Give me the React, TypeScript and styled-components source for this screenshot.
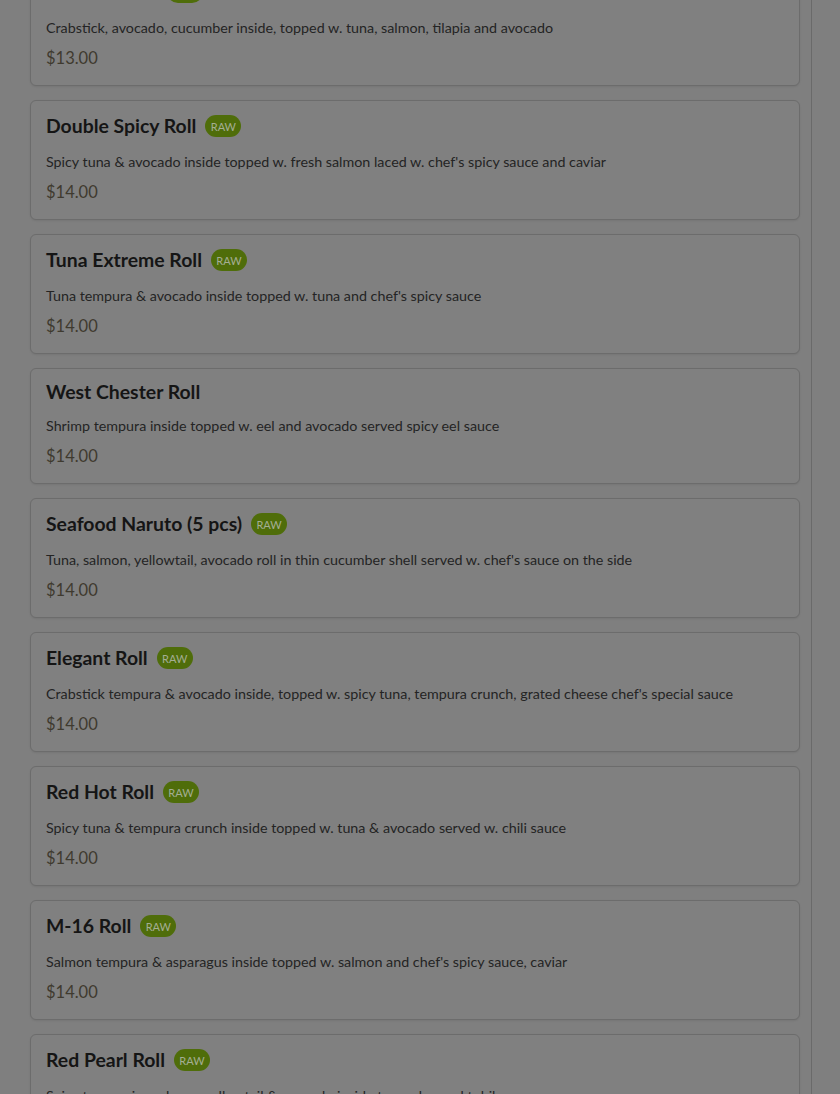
import React, { useEffect, useRef } from "react";
import styled, { createGlobalStyle } from "styled-components";

const GlobalStyle = createGlobalStyle`
  html, body {
    margin: 0;
    padding: 0;
    height: 100%;
    overflow: hidden;
    background: #7f7f7f;
  }
  body {
    font-family: "Nunito", "Lato", "Open Sans", sans-serif;
  }
  * { box-sizing: border-box; }
`;

const Page = styled.div`
  display: flex;
  height: 100vh;
  background: #7f7f7f;
`;

const Scroller = styled.div`
  width: 812px;
  height: 100vh;
  overflow-y: auto;
  border-right: 1px solid #6a6a6a;
  padding: 16px 11px 40px 30px;
  scrollbar-width: none;
  &::-webkit-scrollbar { display: none; }
`;

const List = styled.div`
  display: flex;
  flex-direction: column;
  gap: 14px;
`;

const Card = styled.div`
  border: 1px solid #6c6c6c;
  border-radius: 6px;
  background: #808080;
  box-shadow: 0 1px 2px rgba(0, 0, 0, 0.08);
  padding: 11px 15px 15px;
  display: flex;
  flex-direction: column;
`;

const TitleRow = styled.div<{ $badge: boolean }>`
  display: flex;
  align-items: center;
  gap: 9px;
  height: ${(p) => (p.$badge ? 28 : 24)}px;
`;

const Title = styled.h3`
  margin: 0;
  font-family: "Lato", sans-serif;
  font-weight: 700;
  font-size: 19.4px;
  line-height: 24px;
  color: #151515;
`;

const Badge = styled.span`
  display: inline-flex;
  align-items: center;
  justify-content: center;
  height: 22px;
  width: 36px;
  border-radius: 11px;
  background: #4f6d0a;
  color: #a4ae93;
  font-family: "Lato", sans-serif;
  font-size: 11px;
  font-weight: 400;
`;

const Desc = styled.p`
  margin: 12px 0 0;
  font-family: "Lato", sans-serif;
  font-size: 14.3px;
  line-height: 20px;
  color: #242424;
`;

const Price = styled.div`
  margin-top: 8px;
  font-family: "Lato", sans-serif;
  font-size: 16.5px;
  line-height: 24px;
  color: #3f3a2f;
`;

type Item = { name: string; raw: boolean; desc: string; price: string };

const items: Item[] = [
  { name: "Rainbow Roll", raw: true, desc: "Crabstick, avocado, cucumber inside, topped w. tuna, salmon, tilapia and avocado", price: "$13.00" },
  { name: "Double Spicy Roll", raw: true, desc: "Spicy tuna & avocado inside topped w. fresh salmon laced w. chef's spicy sauce and caviar", price: "$14.00" },
  { name: "Tuna Extreme Roll", raw: true, desc: "Tuna tempura & avocado inside topped w. tuna and chef's spicy sauce", price: "$14.00" },
  { name: "West Chester Roll", raw: false, desc: "Shrimp tempura inside topped w. eel and avocado served spicy eel sauce", price: "$14.00" },
  { name: "Seafood Naruto (5 pcs)", raw: true, desc: "Tuna, salmon, yellowtail, avocado roll in thin cucumber shell served w. chef's sauce on the side", price: "$14.00" },
  { name: "Elegant Roll", raw: true, desc: "Crabstick tempura & avocado inside, topped w. spicy tuna, tempura crunch, grated cheese chef's special sauce", price: "$14.00" },
  { name: "Red Hot Roll", raw: true, desc: "Spicy tuna & tempura crunch inside topped w. tuna & avocado served w. chili sauce", price: "$14.00" },
  { name: "M-16 Roll", raw: true, desc: "Salmon tempura & asparagus inside topped w. salmon and chef's spicy sauce, caviar", price: "$14.00" },
  { name: "Red Pearl Roll", raw: true, desc: "Spicy tuna, spicy salmon, yellowtail & avocado inside topped w. red tobiko", price: "$14.00" },
  { name: "Dragon Roll", raw: false, desc: "Shrimp tempura & cucumber inside topped w. eel and avocado", price: "$14.00" },
];

export default function App() {
  const ref = useRef<HTMLDivElement>(null);
  useEffect(() => {
    if (ref.current) ref.current.scrollTop = 50;
  }, []);
  return (
    <>
      <GlobalStyle />
      <Page>
        <Scroller ref={ref}>
          <List>
            {items.map((it) => (
              <Card key={it.name}>
                <TitleRow $badge={it.raw}>
                  <Title>{it.name}</Title>
                  {it.raw && <Badge>RAW</Badge>}
                </TitleRow>
                <Desc>{it.desc}</Desc>
                <Price>{it.price}</Price>
              </Card>
            ))}
          </List>
        </Scroller>
      </Page>
    </>
  );
}
